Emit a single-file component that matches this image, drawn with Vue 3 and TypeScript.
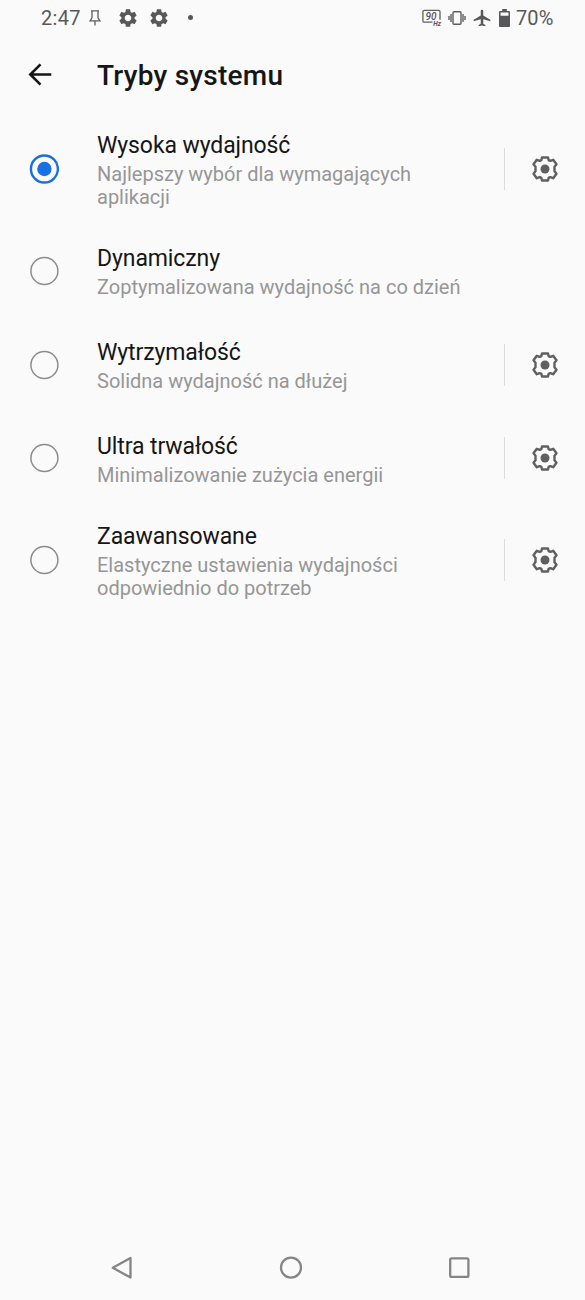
<script setup lang="ts">
interface Mode {
  title: string
  lines: string[]
  selected?: boolean
  configurable?: boolean
}

const modes: Mode[] = [
  { title: 'Wysoka wydajność', lines: ['Najlepszy wybór dla wymagających', 'aplikacji'], selected: true, configurable: true },
  { title: 'Dynamiczny', lines: ['Zoptymalizowana wydajność na co dzień'] },
  { title: 'Wytrzymałość', lines: ['Solidna wydajność na dłużej'], configurable: true },
  { title: 'Ultra trwałość', lines: ['Minimalizowanie zużycia energii'], configurable: true },
  { title: 'Zaawansowane', lines: ['Elastyczne ustawienia wydajności', 'odpowiednio do potrzeb'], configurable: true },
]

const gear =
  'M19.14 12.94c.04-.3.06-.61.06-.94 0-.32-.02-.64-.07-.94l2.03-1.58c.18-.14.23-.41.12-.61l-1.92-3.32c-.12-.22-.37-.29-.59-.22l-2.39.96c-.5-.38-1.03-.7-1.62-.94l-.36-2.54c-.04-.24-.24-.41-.48-.41h-3.84c-.24 0-.43.17-.47.41l-.36 2.54c-.59.24-1.13.57-1.62.94l-2.39-.96c-.22-.08-.47 0-.59.22L2.74 8.87c-.12.21-.08.47.12.61l2.03 1.58c-.05.3-.09.63-.09.94s.02.64.07.94l-2.03 1.58c-.18.14-.23.41-.12.61l1.92 3.32c.12.22.37.29.59.22l2.39-.96c.5.38 1.03.7 1.62.94l.36 2.54c.05.24.24.41.48.41h3.84c.24 0 .44-.17.47-.41l.36-2.54c.59-.24 1.13-.56 1.62-.94l2.39.96c.22.08.47 0 .59-.22l1.92-3.32c.12-.22.07-.47-.12-.61l-2.01-1.58zM12 15.6c-1.98 0-3.6-1.62-3.6-3.6s1.62-3.6 3.6-3.6 3.6 1.62 3.6 3.6-1.62 3.6-3.6 3.6z'
</script>

<template>
  <div class="screen">
    <header class="status">
      <span class="clock">2:47</span>
      <svg class="pin" width="12" height="16" viewBox="0 0 12 16"><path d="M2 .8h8M3 .8v7L1 10.800h10L9 7.800V.8M6 10.800V15.500" /></svg>
      <svg class="cog first" width="22" height="22" viewBox="0 0 24 24"><path :d="gear" /></svg>
      <svg class="cog second" width="22" height="22" viewBox="0 0 24 24"><path :d="gear" /></svg>
      <i class="dot"></i>
      <span class="spacer"></span>
      <svg class="hz" width="20" height="21" viewBox="0 -2 20 21">
        <path d="M10.500 13.200H2.200a1.300 1.300 0 0 1-1.300-1.300V2.700A1.300 1.300 0 0 1 2.200 1.400h14.500A1.300 1.300 0 0 1 18 2.700v8" />
        <text class="rate" x="3.600" y="10.700">90</text><text class="unit" x="11.300" y="16.600">Hz</text>
      </svg>
      <svg class="vibrate" width="18" height="14" viewBox="0 0 18 14"><rect x="5" y=".8" width="8" height="12.400" rx="1" /><path d="M3 3v8M1 5v4M15 3v8M17 5v4" /></svg>
      <svg class="plane" width="20" height="20" viewBox="0 0 24 24"><path d="M22 16v-2l-8.500-5V3.500c0-.83-.67-1.500-1.500-1.500s-1.500.67-1.500 1.500V9L2 14v2l8.500-2.500V19L8 20.500V22l4-1 4 1v-1.500L13.500 19v-5.500L22 16z" /></svg>
      <svg class="battery" width="11" height="18" viewBox="0 0 11 18"><path fill-rule="evenodd" d="M3.200 0h4.600v2H10a1 1 0 0 1 1 1v14a1 1 0 0 1-1 1H1a1 1 0 0 1-1-1V3a1 1 0 0 1 1-1h2.200zM1.500 3.500v3.300h8V3.500z" /></svg>
      <span class="percent">70%</span>
    </header>

    <div class="appbar">
      <svg class="back" width="24" height="24" viewBox="0 0 24 24"><path d="M23.300 11.500H2.500M12.500 1.300L2.300 11.500l10.200 10.200" /></svg>
      <h1>Tryby systemu</h1>
    </div>

    <main>
      <section v-for="mode in modes" :key="mode.title" class="row" :class="{ tall: mode.lines.length > 1 }">
        <svg class="radio" :class="{ selected: mode.selected }" width="30" height="30" viewBox="0 0 30 30">
          <circle class="ring" cx="15.400" cy="15" r="13.500" />
          <circle v-if="mode.selected" class="core" cx="15.400" cy="15" r="7.200" />
        </svg>
        <div class="label">
          <h2>{{ mode.title }}</h2>
          <p v-for="line in mode.lines" :key="line">{{ line }}</p>
        </div>
        <div v-if="mode.configurable" class="config">
          <svg width="28" height="28" viewBox="-14 -14 28 28">
            <path d="M-3-11.500H3L3.600-8.900 5.300-8.100 8.200-9.200 11.500-4.700 9.500-2.300V2.300L11.500 4.700 8.200 9.200 5.300 8.100 3.600 8.900 3 11.500H-3L-3.600 8.900-5.300 8.100-8.200 9.200-11.500 4.700-9.500 2.300V-2.300L-11.500-4.700-8.200-9.200-5.300-8.100-3.600-8.900Z" />
            <circle r="4.500" />
          </svg>
        </div>
      </section>
    </main>

    <nav>
      <svg width="24" height="24" viewBox="0 0 24 24"><path d="M20.500 2v19.600L2.800 11.800z" /></svg>
      <svg width="24" height="24" viewBox="0 0 24 24"><circle cx="12" cy="11.600" r="10" /></svg>
      <svg width="24" height="24" viewBox="0 0 24 24"><rect x="3.200" y="2.300" width="18.200" height="18.600" rx="1.500" /></svg>
    </nav>
  </div>
</template>

<style>
body { margin: 0; background: #fafafa; }
</style>

<style scoped>
.screen { width: 585px; height: 1300px; box-sizing: border-box; display: flex; flex-direction: column; overflow: hidden; background: #fafafa; font-family: Roboto, "Noto Sans", sans-serif; }
svg { display: block; flex: none; }
.status { height: 35px; display: flex; align-items: center; padding: 0 31px 0 41px; color: #58585a; font-size: 20px; }
.clock, .percent { line-height: 36px; white-space: nowrap; }
.clock { width: 48px; letter-spacing: .3px; }
.percent { width: 38px; margin-left: 6px; letter-spacing: .1px; }
.pin { fill: none; stroke: #5f5f5f; stroke-width: 1.3; }
.cog, .plane, .battery { fill: #58585a; }
.first { margin-left: 16px; }
.second { margin-left: 9px; }
.dot { width: 5px; height: 5px; border-radius: 50%; background: #58585a; margin-left: 18px; }
.spacer { flex: 1; }
.hz path { fill: none; stroke: #5f5f5f; stroke-width: 1.3; }
.hz text { fill: #555; font-weight: 500; font-style: italic; }
.hz .rate { font-size: 10px; }
.hz .unit { font-size: 6.5px; font-weight: 700; }
.vibrate { fill: none; stroke: #5f5f5f; stroke-width: 1.4; margin-left: 6px; }
.plane { margin-left: 6px; }
.battery { margin-left: 7px; }
.appbar { height: 79px; display: flex; align-items: center; padding-left: 28px; box-sizing: border-box; }
.back { fill: none; stroke: #161616; stroke-width: 2.6; }
h1 { margin: 2px 0 0 45px; font-size: 28px; letter-spacing: .25px; line-height: 36px; font-weight: 500; color: #161616; }
.row { height: 93.800px; display: flex; align-items: center; padding: 0 26px 0 29px; }
.row.tall { height: 110px; }
.radio { fill: none; }
.ring { stroke: #8c8c8c; stroke-width: 1.5; }
.selected .ring { stroke: #1a6fdc; stroke-width: 2.4; }
.core { fill: #1a6fe4; }
.label { flex: 1; margin-left: 38px; padding-top: 1.2px; white-space: nowrap; }
h2 { margin: 0 0 1px; font-size: 23px; letter-spacing: -.1px; line-height: 32px; font-weight: 400; color: #161616; }
p { margin: 0; font-size: 20px; line-height: 23.500px; color: #969696; }
.config { border-left: 1px solid #dcdcdc; height: 42px; display: flex; align-items: center; padding-left: 26px; }
.config path { fill: none; stroke: #606060; stroke-width: 2.4; stroke-linejoin: round; }
.config circle { fill: #606060; }
nav { margin-top: auto; height: 65px; display: flex; align-items: center; justify-content: space-between; padding: 0 114px 0 110px; }
nav svg { fill: none; stroke: #858585; stroke-width: 2.3; stroke-linejoin: round; }
</style>
